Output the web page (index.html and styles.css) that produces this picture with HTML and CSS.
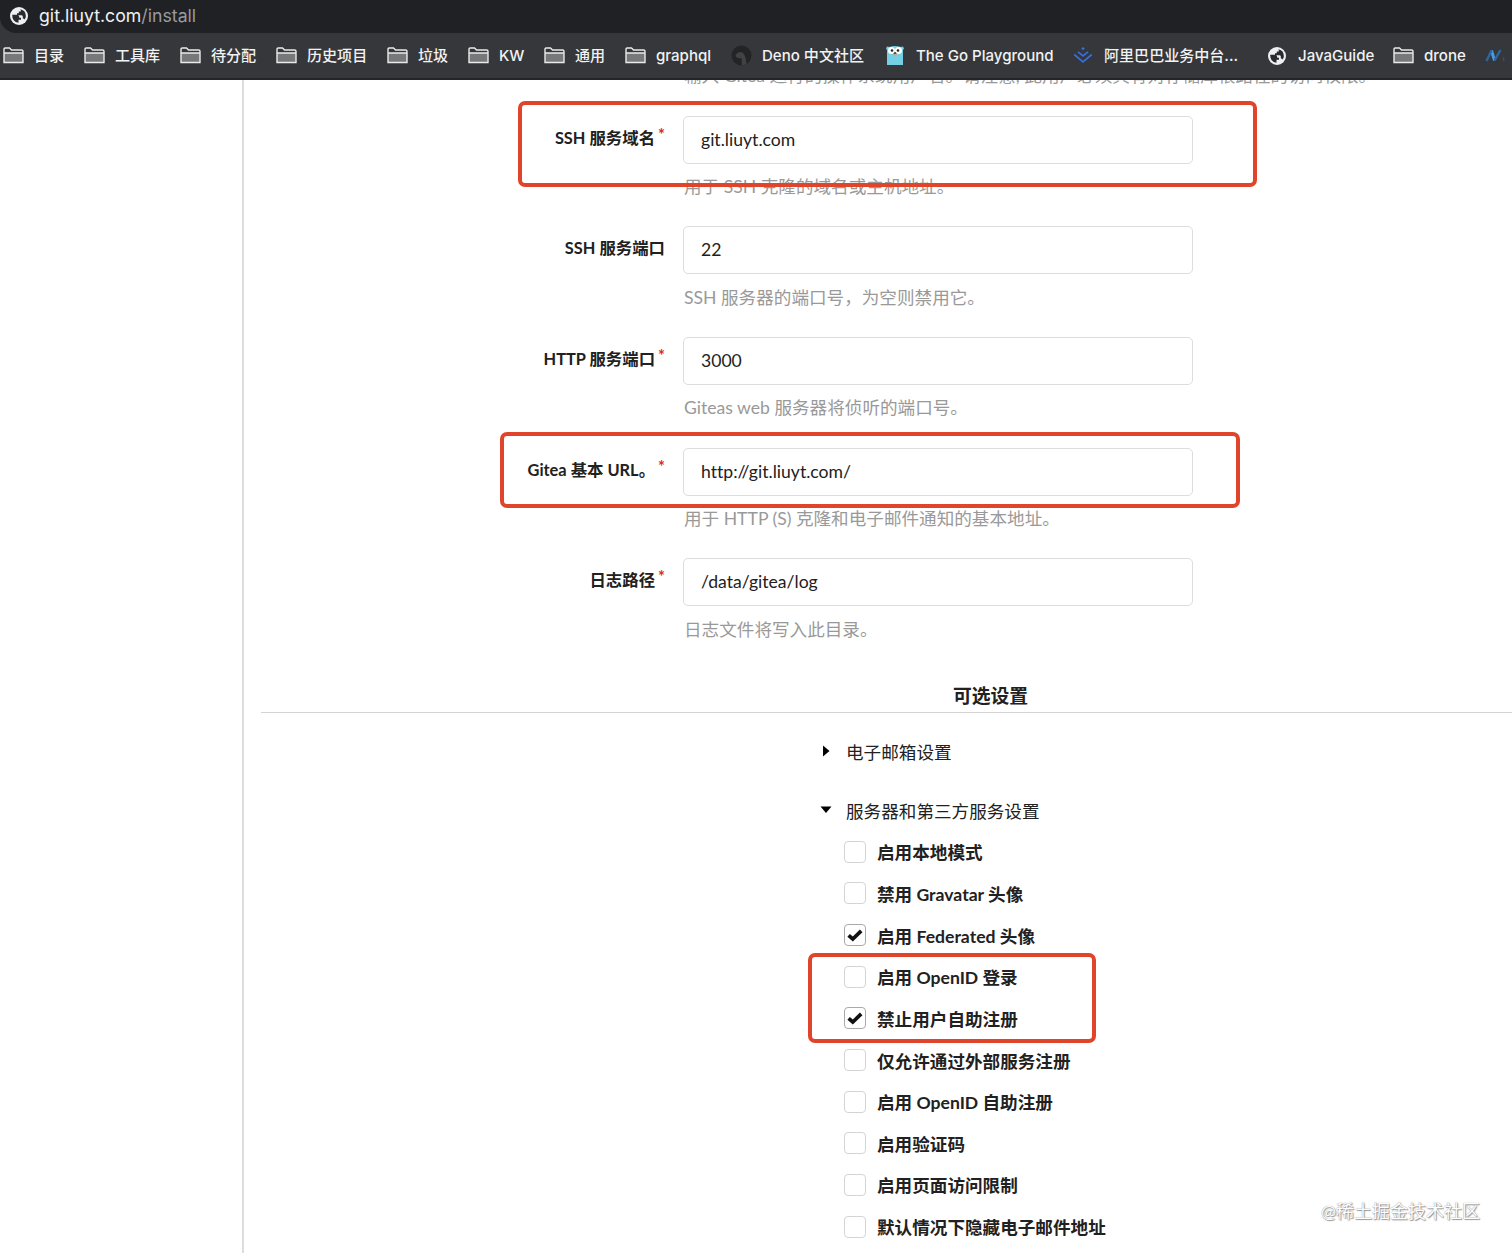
FILE: index.html
```html
<!DOCTYPE html>
<html lang="zh-CN">
<head>
  <meta charset="UTF-8">
  <title>安装 - Gitea</title>
  <link rel="stylesheet" href="styles.css">
</head>
<body>
  <svg class="defs">
    <symbol id="folder" viewBox="0 0 21 17">
      <path d="M1 15.5V2.3Q1 1 2.2 1H6.5L8.5 3H18.6Q20 3 20 4.3V15.5Z" fill="#36373a"/>
      <path d="M1 6H20V15.5H1Z" fill="#77787a"/>
      <path d="M1 15.5V2.3Q1 1 2.2 1H6.5L8.5 3H18.6Q20 3 20 4.3V15.5ZM1 6H20" fill="none" stroke="#e9eaec" stroke-width="1.4"/>
    </symbol>
    <symbol id="globe" viewBox="0 0 18 18">
      <circle cx="9" cy="9" r="9" fill="#edeff1"/>
      <path d="M2.2 7.8H6.3Q9.3 8 9.3 10.8H11V12.800H8.500V15.800Q2 15 2.200 7.800ZM9.800 2.200Q15.800 3 15.900 9Q15.800 11 14.500 12.600Q13.800 11.300 12.800 11.200V9.300Q12.500 8.200 11.500 8.200H7V6.300H8.800V4.600H10.800V3Z" fill="#292a2d"/>
    </symbol>
    <symbol id="check" viewBox="0 0 16 13">
      <path d="M1.6 6.3L5.8 10L14.2 1.9" fill="none" stroke="#111" stroke-width="3.7"/>
    </symbol>
  </svg>

  <div class="browser">
    <div class="address">
      <svg class="globe"><use href="#globe"/></svg>
      <span>git.liuyt.com<span class="path">/install</span></span>
    </div>
    <div class="bookmarks">
      <div class="bookmark"><svg class="folder"><use href="#folder"/></svg>目录</div>
      <div class="bookmark"><svg class="folder"><use href="#folder"/></svg>工具库</div>
      <div class="bookmark"><svg class="folder"><use href="#folder"/></svg>待分配</div>
      <div class="bookmark"><svg class="folder"><use href="#folder"/></svg>历史项目</div>
      <div class="bookmark"><svg class="folder"><use href="#folder"/></svg>垃圾</div>
      <div class="bookmark"><svg class="folder"><use href="#folder"/></svg>KW</div>
      <div class="bookmark"><svg class="folder"><use href="#folder"/></svg>通用</div>
      <div class="bookmark"><svg class="folder"><use href="#folder"/></svg>graphql</div>
      <div class="bookmark">
        <svg class="icon" viewBox="0 0 21 21"><circle cx="10.5" cy="10.5" r="10" fill="#242426"/><path d="M4.5 11Q5.5 7 10 7Q14.5 7.5 15.5 19Q13 20.5 11 20L10.5 13Q6 14 4.5 11Z" fill="#414244"/></svg>
        Deno 中文社区
      </div>
      <div class="bookmark">
        <svg class="icon" viewBox="0 0 21 21"><path d="M2 20V5L1 3.5L2 1.5L4.5 2Q10 0 15.5 2L18 1.5L19 3.5L18 5V20Z" fill="#74cfe4"/><circle cx="6.5" cy="5.5" r="3.5" fill="#fff"/><circle cx="13.5" cy="5.5" r="3.5" fill="#fff"/><circle cx="7" cy="5.5" r="1.3" fill="#222"/><circle cx="13" cy="5.5" r="1.3" fill="#222"/><ellipse cx="10" cy="9" rx="2.2" ry="1.5" fill="#c3a486"/><ellipse cx="10" cy="8" rx="1.3" ry=".8" fill="#222"/></svg>
        The Go Playground
      </div>
      <div class="bookmark">
        <svg class="icon" viewBox="0 0 21 21"><path d="M1.2 9.500L10 16.800L18.800 9.500M5 6.800L10 10.800L15 6.800" fill="none" stroke="#3470dc" stroke-width="1.7"/><path d="M10 2L11.800 3.600L10 5.200L8.200 3.600Z" fill="#3470dc"/></svg>
        阿里巴巴业务中台...
      </div>
      <div class="bookmark"><svg class="globe"><use href="#globe"/></svg>JavaGuide</div>
      <div class="bookmark"><svg class="folder"><use href="#folder"/></svg>drone</div>
      <div class="bookmark">
        <svg class="icon" viewBox="0 0 21 21"><path d="M6.500 5.500L9.500 15.500" fill="none" stroke="#4b9bd8" stroke-width="3"/><path d="M1.500 16L6.500 5.500M9.500 15.500L15.500 5" fill="none" stroke="#2d66a3" stroke-width="2.400"/><path d="M18.7 12V16" stroke="#28568c" stroke-width="1.2"/></svg>
      </div>
    </div>
  </div>

  <div class="page">
    <div class="install">
      <p class="help clipped">输入 Gitea 运行的操作系统用户名。请注意, 此用户必须具有对存储库根路径的访问权限。</p>

      <div class="field">
        <label class="required" for="domain">SSH 服务域名</label>
        <input id="domain" type="text" value="git.liuyt.com">
        <p class="help">用于 SSH 克隆的域名或主机地址。</p>
        <div class="mark mark-domain"></div>
      </div>
      <div class="field">
        <label for="ssh_port">SSH 服务端口</label>
        <input id="ssh_port" type="text" value="22">
        <p class="help">SSH 服务器的端口号，为空则禁用它。</p>
      </div>
      <div class="field">
        <label class="required" for="http_port">HTTP 服务端口</label>
        <input id="http_port" type="text" value="3000">
        <p class="help">Giteas web 服务器将侦听的端口号。</p>
      </div>
      <div class="field">
        <label class="required" for="app_url">Gitea 基本 URL。</label>
        <input id="app_url" type="text" value="http://git.liuyt.com/">
        <p class="help">用于 HTTP (S) 克隆和电子邮件通知的基本地址。</p>
        <div class="mark mark-url"></div>
      </div>
      <div class="field">
        <label class="required" for="log_path">日志路径</label>
        <input id="log_path" type="text" value="/data/gitea/log">
        <p class="help">日志文件将写入此目录。</p>
      </div>

      <h4>可选设置</h4>

      <div class="optional">
        <div class="title"><svg viewBox="0 0 12 12"><path d="M3 0.500L9.500 6L3 11.500Z"/></svg>电子邮箱设置</div>
        <div class="title open"><svg viewBox="0 0 12 12"><path d="M0.500 2.500H11.500L6 9Z"/></svg>服务器和第三方服务设置</div>
        <div class="checks">
          <div class="check"><span class="box"></span>启用本地模式</div>
          <div class="check"><span class="box"></span>禁用 Gravatar 头像</div>
          <div class="check"><span class="box checked"><svg><use href="#check"/></svg></span>启用 Federated 头像</div>
          <div class="check"><span class="box"></span>启用 OpenID 登录<div class="mark mark-openid"></div></div>
          <div class="check"><span class="box checked"><svg><use href="#check"/></svg></span>禁止用户自助注册</div>
          <div class="check"><span class="box"></span>仅允许通过外部服务注册</div>
          <div class="check"><span class="box"></span>启用 OpenID 自助注册</div>
          <div class="check"><span class="box"></span>启用验证码</div>
          <div class="check"><span class="box"></span>启用页面访问限制</div>
          <div class="check"><span class="box"></span>默认情况下隐藏电子邮件地址</div>
        </div>
      </div>
    </div>
  </div>
  <div class="watermark">@稀土掘金技术社区</div>
</body>
</html>
```
FILE: styles.css
```css
* {
  box-sizing: border-box;
}
body {
  margin: 0;
  height: 1253px;
  overflow: hidden;
  position: relative;
  background: #fff;
  color: #212121;
  font-family: Lato, "Noto Sans CJK SC", sans-serif;
  font-size: 17.6px;
  font-variant-ligatures: none;
}
.defs {
  display: none;
}

/* browser bars */
.browser {
  height: 80px;
  background: #36373a;
  border-bottom: 2px solid #242528;
  color: #f1f2f3;
  font-family: Inter, "Noto Sans CJK SC", sans-serif;
}
.address {
  display: flex;
  align-items: center;
  gap: 11px;
  height: 33px;
  padding: 0 0 2px 10px;
  background: #202124;
  border-bottom-left-radius: 16px;
  font-size: 17.7px;
}
.path {
  color: #999b9e;
}
.bookmarks {
  display: grid;
  grid-template-columns: 81px 96px 96px 111px 81px 76px 81px 106px 154px 188px 195px 125px 92px 27px;
  height: 45px;
  padding-left: 3px;
  font-size: 15.05px;
  font-weight: 500;
  line-height: 20px;
}
.bookmark {
  display: flex;
  align-items: center;
  gap: 10px;
  white-space: nowrap;
}
.folder {
  width: 21px;
  height: 17px;
}
.icon {
  width: 21px;
  height: 21px;
}
.globe {
  width: 18px;
  height: 18px;
}
.bookmark .globe {
  margin-right: 2px;
}

/* install form */
.page {
  height: 1173px;
  margin-left: 242px;
  padding-left: 19px;
  border-left: 2px solid #dcdddd;
  overflow: hidden;
}
.help {
  margin: 0;
  line-height: 24px;
  color: #999;
  white-space: nowrap;
}
.clipped {
  margin: -16px 0 27.7px 421px;
}
.field {
  position: relative;
  display: grid;
  grid-template-columns: 402px 510px;
  column-gap: 18px;
  grid-template-rows: 48px 24px;
  row-gap: 11.3px;
  margin-bottom: 27.4px;
}
.field label {
  padding-top: 10px;
  line-height: 24px;
  font-size: 16.4px;
  font-weight: 700;
  text-align: right;
}
.required::after {
  content: "*";
  display: inline-block;
  margin-left: 3px;
  vertical-align: top;
  margin-top: -3px;
  color: #db2828;
}
.field input {
  height: 48px;
  padding: 0 17px 1px;
  border: 1px solid #dcdddd;
  border-radius: 5px;
  outline: none;
  color: #212121;
  font: inherit;
  font-variant-ligatures: none;
}
.field .help {
  grid-column: 2;
  padding-left: 1px;
}
h4 {
  margin: 0 -40px 0 -2px;
  height: 43.4px;
  padding: 14.4px 0 0 168px;
  border-bottom: 1px solid #d4d4d5;
  font-size: 18.8px;
  font-weight: 700;
  line-height: 24px;
  text-align: center;
}
.optional {
  padding-left: 557px;
}
.title {
  display: flex;
  align-items: center;
  gap: 14px;
  height: 59px;
  padding-top: 18px;
}
.title svg {
  width: 12px;
  height: 12px;
}
.checks {
  padding: 0.4px 0 0 24px;
}
.check {
  position: relative;
  display: flex;
  align-items: center;
  gap: 11px;
  height: 41.67px;
  font-weight: 700;
}
.box {
  display: flex;
  align-items: center;
  justify-content: center;
  width: 22px;
  height: 22px;
  border: 1px solid #d4d4d5;
  border-radius: 4px;
}
.box svg {
  width: 16px;
  height: 13px;
}
.checked {
  border-color: #aaa;
}

/* red outlines over the form */
.mark {
  position: absolute;
  border: 4px solid #e0442a;
  border-radius: 7px;
}
.mark-domain {
  left: 254.500px;
  top: -15px;
  width: 739px;
  height: 86px;
}
.mark-url {
  left: 237px;
  top: -15.500px;
  width: 740px;
  height: 76px;
}
.mark-openid {
  left: -36px;
  top: -2.800px;
  width: 288px;
  height: 90px;
}

.watermark {
  position: absolute;
  right: 32px;
  bottom: 29px;
  color: #fff;
  font-size: 18px;
  line-height: 26px;
  text-shadow: 0 0 1px #777, 1px 1px 1px #999;
}
```
